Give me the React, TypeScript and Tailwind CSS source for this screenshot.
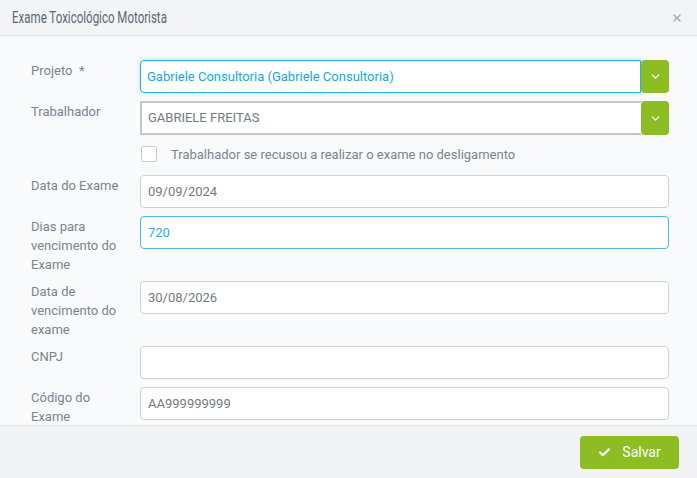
import { Check, ChevronDown, X } from "lucide-react";

const font = { fontFamily: "Roboto, 'Noto Sans', sans-serif" };

const Label = (props: { children: React.ReactNode }) => (
  <div className="w-[109px] shrink-0 pt-[1px] text-[13px] leading-[19px] text-[#7b848d]">
    {props.children}
  </div>
);

const TextInput = (props: { value: string; focus?: boolean }) => (
  <div
    className={
      props.focus
        ? "flex h-[33px] flex-1 items-center rounded-[4px] border border-[#4ab8e0] bg-white px-[7px] text-[13px] text-[#3ba7d6]"
        : "flex h-[33px] flex-1 items-center rounded-[4px] border border-[#cfd3d7] bg-white px-[7px] text-[13px] text-[#737b83]"
    }
  >
    {props.value}
  </div>
);

const GreenToggle = (props: { h: string }) => (
  <div className={`flex w-[28px] shrink-0 items-center justify-center rounded-[4px] bg-[#8cbd22] ${props.h}`}>
    <ChevronDown size={13} strokeWidth={2} className="text-white" />
  </div>
);

export default function App() {
  return (
    <div style={font} className="flex h-[478px] w-[697px] flex-col overflow-hidden bg-[#f9fafc]">
      <div className="flex h-[36px] shrink-0 items-center justify-between border-b border-[#e3e5e8] bg-[#f3f4f6] pl-[12px] pr-[14px]">
        <span className="inline-block origin-left scale-x-[0.72] whitespace-nowrap text-[16px] text-[#5d6771]">
          Exame Toxicológico Motorista
        </span>
        <X size={12} strokeWidth={3} className="text-[#a3aab2]" />
      </div>

      <div className="flex min-h-0 flex-1 flex-col overflow-hidden pl-[31px] pr-[28px] pt-[24px]">
        <div className="flex h-[33px] shrink-0">
          <Label>Projeto&nbsp; *</Label>
          <div className="flex flex-1">
            <div className="flex h-[33px] flex-1 items-center rounded-l-[4px] border border-[#1fb4e6] bg-white px-[6px] text-[13px] text-[#1aa7dc] shadow-[0_0_4px_rgba(31,180,230,0.35)]">
              Gabriele Consultoria (Gabriele Consultoria)
            </div>
            <GreenToggle h="h-[33px]" />
          </div>
        </div>

        <div className="mt-[8px] flex h-[34px] shrink-0">
          <Label>Trabalhador</Label>
          <div className="flex flex-1">
            <div className="flex h-[34px] flex-1 items-center border-2 border-r-0 border-[#c3c6c9] bg-white px-[6px] text-[13px] text-[#737b83]">
              GABRIELE FREITAS
            </div>
            <GreenToggle h="h-[34px]" />
          </div>
        </div>

        <div className="mt-[11px] flex h-[16px] shrink-0 items-center pl-[110px]">
          <div className="h-[16px] w-[16px] rounded-[2px] border border-[#c8ccd0] bg-white" />
          <span className="ml-[14px] text-[13px] leading-[17px] text-[#7b848d]">
            Trabalhador se recusou a realizar o exame no desligamento
          </span>
        </div>

        <div className="mt-[13px] flex h-[33px] shrink-0">
          <Label>Data do Exame</Label>
          <TextInput value="09/09/2024" />
        </div>

        <div className="mt-[8px] flex h-[57px] shrink-0">
          <Label>
            Dias para
            <br />
            vencimento do
            <br />
            Exame
          </Label>
          <TextInput value="720" focus />
        </div>

        <div className="mt-[8px] flex h-[57px] shrink-0">
          <Label>
            Data de
            <br />
            vencimento do
            <br />
            exame
          </Label>
          <TextInput value="30/08/2026" />
        </div>

        <div className="mt-[8px] flex h-[33px] shrink-0">
          <Label>CNPJ</Label>
          <TextInput value="" />
        </div>

        <div className="mt-[8px] flex h-[38px] shrink-0">
          <Label>
            Código do
            <br />
            Exame
          </Label>
          <TextInput value="AA999999999" />
        </div>
      </div>

      <div className="flex h-[53px] shrink-0 items-center justify-end border-t border-[#e3e5e8] bg-[#f2f3f5] pr-[18px]">
        <button className="flex h-[33px] w-[99px] items-center justify-center gap-[11px] rounded-[4px] bg-[#8cbd22] text-[14px] text-white">
          <Check size={13} strokeWidth={4} />
          Salvar
        </button>
      </div>
    </div>
  );
}
